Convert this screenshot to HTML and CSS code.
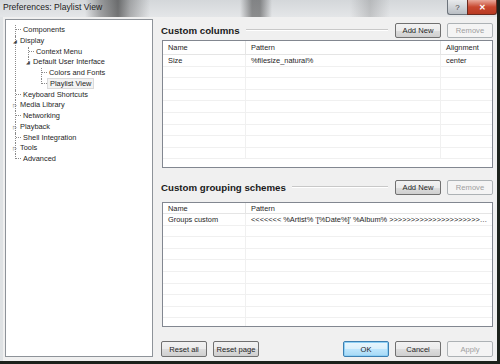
FILE: index.html
```html
<!DOCTYPE html>
<html lang="en">
<head>
    <meta charset="UTF-8">
    <title>Preferences: Playlist View</title>
    <link rel="stylesheet" href="styles.css">
</head>
<body>
    <div class="window">
        <div class="titlebar">
            <span class="title">Preferences: Playlist View</span>
            <div class="caption-buttons">
                <span class="cap-btn help">?</span>
                <span class="cap-btn close">&#x2715;</span>
            </div>
        </div>

        <div class="client">
            <div class="tree">
                <ul class="branch root">
                    <li><div class="node"><span class="twist dash"></span>Components</div></li>
                    <li>
                        <div class="node"><span class="twist">&#x25E2;</span>Display</div>
                        <ul class="branch">
                            <li><div class="node"><span class="twist dash"></span>Context Menu</div></li>
                            <li class="last">
                                <div class="node"><span class="twist">&#x25E2;</span>Default User Interface</div>
                                <ul class="branch">
                                    <li><div class="node"><span class="twist dash"></span>Colors and Fonts</div></li>
                                    <li class="last"><div class="node"><span class="twist dash"></span><span class="selected">Playlist View</span></div></li>
                                </ul>
                            </li>
                        </ul>
                    </li>
                    <li><div class="node"><span class="twist dash"></span>Keyboard Shortcuts</div></li>
                    <li><div class="node"><span class="twist">&#x25B7;</span>Media Library</div></li>
                    <li><div class="node"><span class="twist dash"></span>Networking</div></li>
                    <li><div class="node"><span class="twist">&#x25B7;</span>Playback</div></li>
                    <li><div class="node"><span class="twist dash"></span>Shell Integration</div></li>
                    <li><div class="node"><span class="twist">&#x25B7;</span>Tools</div></li>
                    <li class="last"><div class="node"><span class="twist dash"></span>Advanced</div></li>
                </ul>
            </div>

            <div class="page">
                <div class="section-head">
                    <h2>Custom columns</h2>
                    <span class="rule"></span>
                    <button class="btn">Add New</button>
                    <button class="btn" disabled>Remove</button>
                </div>
                <div class="list list-columns">
                    <div class="row head">
                        <span class="c-name">Name</span>
                        <span class="c-pattern">Pattern</span>
                        <span class="c-align">Alignment</span>
                    </div>
                    <div class="row">
                        <span class="c-name">Size</span>
                        <span class="c-pattern">%filesize_natural%</span>
                        <span class="c-align">center</span>
                    </div>
                    <div class="row"><span class="c-name"></span><span class="c-pattern"></span><span class="c-align"></span></div>
                    <div class="row"><span class="c-name"></span><span class="c-pattern"></span><span class="c-align"></span></div>
                    <div class="row"><span class="c-name"></span><span class="c-pattern"></span><span class="c-align"></span></div>
                    <div class="row"><span class="c-name"></span><span class="c-pattern"></span><span class="c-align"></span></div>
                    <div class="row"><span class="c-name"></span><span class="c-pattern"></span><span class="c-align"></span></div>
                    <div class="row"><span class="c-name"></span><span class="c-pattern"></span><span class="c-align"></span></div>
                    <div class="row"><span class="c-name"></span><span class="c-pattern"></span><span class="c-align"></span></div>
                    <div class="row"><span class="c-name"></span><span class="c-pattern"></span><span class="c-align"></span></div>
                </div>

                <div class="section-head second">
                    <h2>Custom grouping schemes</h2>
                    <span class="rule"></span>
                    <button class="btn">Add New</button>
                    <button class="btn" disabled>Remove</button>
                </div>
                <div class="list list-groups">
                    <div class="row head">
                        <span class="c-name">Name</span>
                        <span class="c-pattern wide">Pattern</span>
                    </div>
                    <div class="row">
                        <span class="c-name">Groups custom</span>
                        <span class="c-pattern wide">&lt;&lt;&lt;&lt;&lt;&lt;&lt; %Artist% '[%Date%]' %Album% &gt;&gt;&gt;&gt;&gt;&gt;&gt;&gt;&gt;&gt;&gt;&gt;&gt;&gt;&gt;&gt;&gt;&gt;&gt;&gt;&gt;&gt;&gt;&gt;&gt;&gt;&gt;&gt;&gt;&gt;</span>
                    </div>
                    <div class="row"><span class="c-name"></span><span class="c-pattern wide"></span></div>
                    <div class="row"><span class="c-name"></span><span class="c-pattern wide"></span></div>
                    <div class="row"><span class="c-name"></span><span class="c-pattern wide"></span></div>
                    <div class="row"><span class="c-name"></span><span class="c-pattern wide"></span></div>
                    <div class="row"><span class="c-name"></span><span class="c-pattern wide"></span></div>
                    <div class="row"><span class="c-name"></span><span class="c-pattern wide"></span></div>
                    <div class="row"><span class="c-name"></span><span class="c-pattern wide"></span></div>
                    <div class="row"><span class="c-name"></span><span class="c-pattern wide"></span></div>
                    <div class="row"><span class="c-name"></span><span class="c-pattern wide"></span></div>
                </div>

                <div class="footer">
                    <button class="btn">Reset all</button>
                    <button class="btn">Reset page</button>
                    <span class="spacer"></span>
                    <button class="btn default">OK</button>
                    <button class="btn">Cancel</button>
                    <button class="btn" disabled>Apply</button>
                </div>
            </div>
        </div>
    </div>
</body>
</html>
```

FILE: styles.css
```css
* {
    margin: 0;
    padding: 0;
    box-sizing: border-box;
}

body {
    background: #1c221c;
    font-family: 'Liberation Sans', Arial, sans-serif;
    font-size: 7.4px;
    color: #1e1e1e;
    width: 500px;
    height: 364px;
    overflow: hidden;
}

.window {
    width: 497px;
    height: 361px;
    background: #dfe2e4;
    display: flex;
    flex-direction: column;
}

/* glass title bar */
.titlebar {
    height: 17px;
    flex-shrink: 0;
    display: flex;
    align-items: flex-start;
    justify-content: space-between;
    background:
        linear-gradient(90deg,
            rgba(0,0,0,0) 0, rgba(0,0,0,0) 85px,
            rgba(40,40,40,0.35) 100px, rgba(20,20,20,0.55) 118px, rgba(40,40,40,0.3) 130px,
            rgba(0,0,0,0) 150px, rgba(0,0,0,0) 240px,
            rgba(30,30,30,0.45) 252px, rgba(30,30,30,0.45) 260px,
            rgba(0,0,0,0) 272px, rgba(0,0,0,0) 350px,
            rgba(60,60,60,0.2) 370px, rgba(0,0,0,0) 390px),
        linear-gradient(#d4d7da, #e4e6e8);
}

.title {
    padding: 2px 0 0 3px;
    font-size: 8.6px;
    color: #222;
}

.caption-buttons {
    display: flex;
}

.cap-btn {
    height: 15px;
    display: flex;
    align-items: center;
    justify-content: center;
    font-size: 8px;
    border: 1px solid #6d747c;
    border-top: none;
}

.help {
    width: 20px;
    background: linear-gradient(#e8eaec, #b9bec4);
    color: #444;
    border-radius: 0 0 0 3px;
    border-right: none;
}

.close {
    width: 30px;
    background: linear-gradient(#e9a99b, #c8472f 50%, #b83a22);
    color: #fff;
    font-weight: bold;
    border-radius: 0 0 3px 0;
    border-color: #6a2a1e;
}

.client {
    flex: 1;
    display: flex;
    background: #f0f0f0;
    margin-left: 3px;
    padding: 2px 0 4px 2px;
    gap: 6px;
}

/* navigation tree */
.tree {
    width: 148px;
    flex-shrink: 0;
    background: #fff;
    border: 1px solid #8e9399;
    padding: 5px 0 0 9px;
}

.branch {
    list-style: none;
}

.branch li {
    border-left: 1px dotted #8a8a8a;
}

.branch li.last {
    border-left-color: transparent;
}

.branch .branch {
    margin-left: 12px;
}

.node {
    position: relative;
    height: 10.75px;
    line-height: 10.75px;
    white-space: nowrap;
}

.branch li.last > .node::before {
    content: "";
    position: absolute;
    left: -1px;
    top: 0;
    height: 5px;
    border-left: 1px dotted #8a8a8a;
}

.twist {
    display: inline-block;
    width: 7px;
    height: 10.75px;
    line-height: 10.75px;
    font-size: 5px;
    color: #444;
    margin-left: -3px;
    vertical-align: top;
}

.twist.dash {
    width: 5px;
    height: 5px;
    margin: 0 2px 0 0;
    border-bottom: 1px dotted #8a8a8a;
}

.selected {
    background: #f3f3f3;
    border: 1px solid #dadada;
    padding: 0 2px;
    margin-left: -2px;
}

/* right page */
.page {
    flex: 1;
    min-width: 0;
    display: flex;
    flex-direction: column;
    padding: 4px 4px 0 0;
}

.section-head {
    display: flex;
    align-items: center;
    gap: 6px;
    height: 14px;
    padding-left: 2px;
}

.section-head.second {
    margin-top: 12px;
}

.section-head h2 {
    font-size: 9.7px;
    font-weight: bold;
    color: #1a1a1a;
}

.rule {
    flex: 1;
    height: 2px;
    border-top: 1px solid #c8c8c8;
    border-bottom: 1px solid #fff;
    margin-right: 1px;
}

.btn {
    width: 46px;
    height: 15px;
    flex-shrink: 0;
    font-family: 'Liberation Sans', Arial, sans-serif;
    font-size: 7.6px;
    color: #1e1e1e;
    border: 1px solid #707070;
    border-radius: 2px;
    background: linear-gradient(#f2f2f2 0, #ebebeb 50%, #dddddd 51%, #cfcfcf 100%);
}

.btn:disabled {
    color: #a0a0a0;
    border-color: #adb2b5;
    background: #f4f4f4;
}

.btn.default {
    border-color: #3c7fb1;
    background: linear-gradient(#eaf6fd 0, #d9f0fc 50%, #bee6fd 51%, #a7d9f5 100%);
    box-shadow: inset 0 0 0 1px #8fd0f5;
}

/* list views */
.list {
    margin: 3px 0 0 3px;
    background: #fff;
    border: 1px solid #828790;
    overflow: hidden;
}

.list-columns {
    height: 128px;
}

.list-groups {
    height: 125px;
    margin-top: 8px;
}

.row {
    display: flex;
    height: 11.6px;
    line-height: 11.6px;
    border-bottom: 1px solid #f0f0f0;
}

.row.head {
    height: 14px;
    line-height: 14px;
    border-bottom: 1px solid #e5e5e5;
}

.list-groups .row.head {
    height: 11px;
    line-height: 11px;
}

.row span {
    padding-left: 5px;
    white-space: nowrap;
    overflow: hidden;
    text-overflow: ellipsis;
}

.c-name {
    width: 83px;
    flex-shrink: 0;
    border-right: 1px solid #f0f0f0;
}

.c-pattern {
    width: 195px;
    flex-shrink: 0;
    border-right: 1px solid #f0f0f0;
}

.c-pattern.wide {
    flex: 1;
    width: auto;
    border-right: none;
    padding-right: 4px;
}

.c-align {
    flex: 1;
}

.row.head .c-name,
.row.head .c-pattern {
    border-right-color: #e5e5e5;
}

.footer {
    display: flex;
    gap: 6px;
    margin-top: 14px;
    padding-left: 2px;
}

.footer .btn {
    height: 16px;
}

.spacer {
    flex: 1;
}
```
